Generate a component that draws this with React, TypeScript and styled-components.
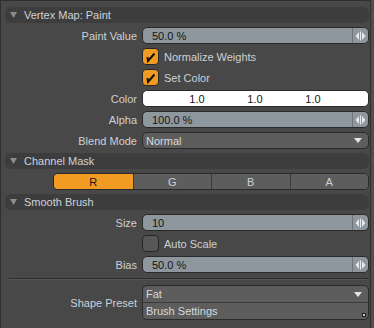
import styled, { createGlobalStyle } from 'styled-components'

const GlobalStyle = createGlobalStyle`
  html, body {
    margin: 0;
    padding: 0;
    background: #4e4e4e;
    font-family: 'Liberation Sans', Arial, sans-serif;
  }
`

type RowProps = { label?: string; children: React.ReactNode }

function Row({ label, children }: RowProps) {
  return (
    <RowGrid>
      <Label>{label}</Label>
      {children}
    </RowGrid>
  )
}

function Slider({ value }: { value: string }) {
  return (
    <SliderField>
      <SliderValue>{value}</SliderValue>
      <SliderGrip>
        <svg width="11" height="10" viewBox="0 0 11 10">
          <path d="M4 1 L0.5 5 L4 9 Z" fill="#e6e9eb" />
          <rect x="5" y="0.5" width="1" height="9" fill="#e6e9eb" />
          <path d="M7 1 L10.5 5 L7 9 Z" fill="#e6e9eb" />
        </svg>
      </SliderGrip>
    </SliderField>
  )
}

function Check({ on, text }: { on: boolean; text: string }) {
  return (
    <CheckWrap>
      <CheckBox $on={on}>
        {on && (
          <svg width="15" height="15" viewBox="0 0 15 15">
            <path d="M4.5 8 L5 12 L11.5 4.5" stroke="#111" strokeWidth="2" fill="none" />
          </svg>
        )}
      </CheckBox>
      <CheckText>{text}</CheckText>
    </CheckWrap>
  )
}

function Arrow() {
  return (
    <svg width="8" height="5" viewBox="0 0 8 5">
      <path d="M0 0 L8 0 L4 5 Z" fill="#e4e6e8" />
    </svg>
  )
}

function Header({ title }: { title: string }) {
  return (
    <SectionHeader>
      <svg width="7" height="6" viewBox="0 0 7 6">
        <path d="M0 0 L7 0 L3.5 6 Z" fill="#8a8d90" />
      </svg>
      <span>{title}</span>
    </SectionHeader>
  )
}

export default function App() {
  const channels = ['R', 'G', 'B', 'A']
  return (
    <>
      <GlobalStyle />
      <Panel>
        <Header title="Vertex Map: Paint" />
        <Row label="Paint Value">
          <Slider value="50.0 %" />
        </Row>
        <Row>
          <Check on text="Normalize Weights" />
        </Row>
        <Row>
          <Check on text="Set Color" />
        </Row>
        <Row label="Color">
          <ColorField>
            <ColorCell>1.0</ColorCell>
            <ColorCell>1.0</ColorCell>
            <ColorCell>1.0</ColorCell>
          </ColorField>
        </Row>
        <Row label="Alpha">
          <Slider value="100.0 %" />
        </Row>
        <Row label="Blend Mode">
          <Dropdown>
            <span>Normal</span>
            <Arrow />
          </Dropdown>
        </Row>

        <Header title="Channel Mask" />
        <Tabs>
          {channels.map((c, i) => (
            <Tab key={c} $active={i === 0}>
              {c}
            </Tab>
          ))}
        </Tabs>

        <Header title="Smooth Brush" />
        <Row label="Size">
          <Slider value="10" />
        </Row>
        <Row>
          <Check on={false} text="Auto Scale" />
        </Row>
        <Row label="Bias">
          <Slider value="50.0 %" />
        </Row>

        <Divider />

        <Row label="Shape Preset">
          <PresetBox>
            <PresetItem>
              <span>Fat</span>
              <Arrow />
            </PresetItem>
            <PresetItem>
              <span>Brush Settings</span>
              <ResizeMark />
            </PresetItem>
          </PresetBox>
        </Row>
      </Panel>
    </>
  )
}

const Panel = styled.div`
  box-sizing: border-box;
  width: 371px;
  height: 328px;
  background: #484848;
  border-top: 1px solid #2f2f2f;
  border-left: 1px solid #2f2f2f;
  border-right: 1px solid #2f2f2f;
  padding: 6px 1px 0 0;
  display: flex;
  flex-direction: column;
  gap: 4px;
  font-size: 11px;
  color: #cdd1d5;
`

const SectionHeader = styled.div`
  height: 16px;
  margin-left: 4px;
  background: #3d3d3d;
  border-radius: 6px;
  display: flex;
  align-items: center;
  gap: 7px;
  padding-left: 5px;
  font-size: 11px;
  color: #cdd2d8;
`

const RowGrid = styled.div`
  display: grid;
  grid-template-columns: 136px 1fr;
  column-gap: 5px;
  height: 17px;
  align-items: stretch;
`

const Label = styled.div`
  display: flex;
  align-items: center;
  justify-content: flex-end;
  color: #cdd1d5;
`

const SliderField = styled.div`
  box-sizing: border-box;
  display: flex;
  background: #8e979e;
  border: 1px solid #2a2a2a;
  border-radius: 5px;
  overflow: hidden;
`

const SliderValue = styled.div`
  flex: 1;
  display: flex;
  align-items: center;
  padding-left: 9px;
  color: #141414;
`

const SliderGrip = styled.div`
  width: 15px;
  border-left: 1px solid #6d757b;
  display: flex;
  align-items: center;
  justify-content: center;
`

const CheckWrap = styled.div`
  display: flex;
  align-items: center;
  gap: 5px;
`

const CheckBox = styled.div<{ $on: boolean }>`
  box-sizing: border-box;
  width: 17px;
  height: 17px;
  border: 1px solid #262626;
  border-radius: 4px;
  background: ${(p) => (p.$on ? '#f29b22' : '#575757')};
  display: flex;
  align-items: center;
  justify-content: center;
`

const CheckText = styled.span`
  color: #cdd1d5;
`

const ColorField = styled.div`
  box-sizing: border-box;
  display: flex;
  background: #ffffff;
  border: 1px solid #2a2a2a;
  border-radius: 5px;
  padding-left: 25px;
  color: #141414;
`

const ColorCell = styled.div`
  width: 58px;
  display: flex;
  align-items: center;
  justify-content: center;
`

const Dropdown = styled.div`
  box-sizing: border-box;
  display: flex;
  align-items: center;
  justify-content: space-between;
  background: #5d5d5d;
  border: 1px solid #2a2a2a;
  border-radius: 5px;
  padding: 0 6px 0 3px;
  color: #d6d9dc;
`

const Tabs = styled.div`
  box-sizing: border-box;
  margin-left: 52px;
  height: 17px;
  display: grid;
  grid-template-columns: repeat(4, 1fr);
  border: 1px solid #2a2a2a;
  border-radius: 5px;
  overflow: hidden;
  background: #5d5d5d;
`

const Tab = styled.div<{ $active: boolean }>`
  display: flex;
  align-items: center;
  justify-content: center;
  background: ${(p) => (p.$active ? '#f29b22' : '#5d5d5d')};
  color: ${(p) => (p.$active ? '#141414' : '#cdd1d5')};
  border-left: 1px solid #3a3a3a;
  &:first-child {
    border-left: none;
  }
`

const Divider = styled.div`
  margin: 1px 0 1px 8px;
  height: 1px;
  background: #2c2c2c;
  border-bottom: 1px solid #555555;
`

const PresetBox = styled.div`
  box-sizing: border-box;
  height: 35px;
  display: flex;
  flex-direction: column;
  background: #5d5d5d;
  border: 1px solid #2a2a2a;
  border-radius: 5px;
  color: #d6d9dc;
`

const PresetItem = styled.div`
  position: relative;
  flex: 1;
  display: flex;
  align-items: center;
  justify-content: space-between;
  padding: 0 6px 0 3px;
  & + & {
    border-top: 1px solid #3a3a3a;
  }
`

const ResizeMark = styled.div`
  position: absolute;
  right: 2px;
  bottom: 2px;
  width: 2px;
  height: 2px;
  border: 1px solid #1a1a1a;
  background: #cfcfcf;
`
